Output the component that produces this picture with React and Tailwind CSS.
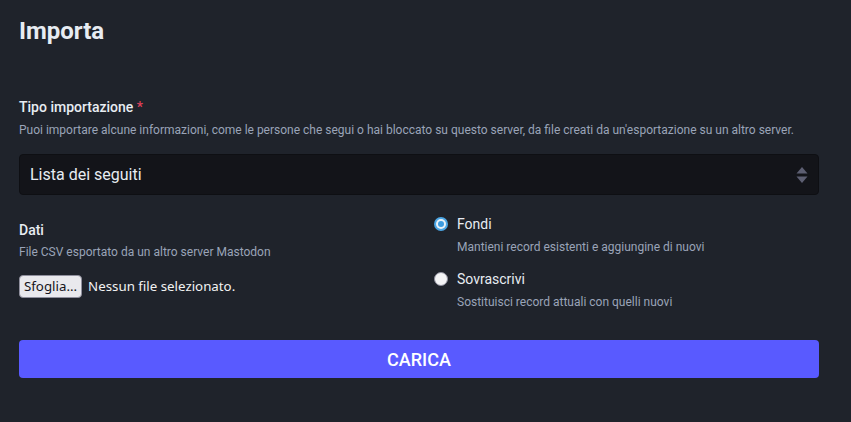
import React from "react";

export default function App() {
  return (
    <div
      className="min-h-[422px] w-full bg-[#1f232b] pl-[19px] pr-[32px] pt-[15px] text-[#d9e1e8]"
      style={{ fontFamily: "Roboto, 'Liberation Sans', sans-serif" }}
    >
      {/* Title */}
      <h1 className="text-[24px] font-bold leading-[32px] text-[#e7ecf2]">Importa</h1>

      {/* Tipo importazione */}
      <div className="mt-[51px]">
        <label className="block text-[14px] font-medium leading-[18px] text-[#e7ecf2]">
          Tipo importazione <span className="text-[#df405a]">*</span>
        </label>
        <p className="mt-[6px] text-[12px] leading-[16px] text-[#9aa4b8]">
          Puoi importare alcune informazioni, come le persone che segui o hai bloccato su questo server, da file creati da un'esportazione su un altro server.
        </p>
        <div className="mt-[16px] flex h-[41px] items-center justify-between rounded-[4px] border border-[#0e0f13] bg-[#131419] pl-[10px] pr-[10px]">
          <span className="text-[16px] text-[#e7ecf2]">Lista dei seguiti</span>
          <svg width="12" height="18" viewBox="0 0 12 18">
            <path d="M6 1 L11.5 7.5 H0.5 Z" fill="#5d5f72" />
            <path d="M6 17 L11.5 10.5 H0.5 Z" fill="#5d5f72" />
          </svg>
        </div>
      </div>

      {/* Dati + radios */}
      <div className="mt-[25px] grid grid-cols-2 gap-[30px]">
        <div>
          <div className="pt-[1px] text-[14px] font-medium leading-[18px] text-[#e7ecf2]">Dati</div>
          <p className="mt-[5px] text-[12px] leading-[16px] text-[#9aa4b8]">
            File CSV esportato da un altro server Mastodon
          </p>
          <div
            className="mt-[15px] flex items-center gap-[6px] text-[13.3px]"
            style={{ fontFamily: "'Noto Sans', 'DejaVu Sans', sans-serif" }}
          >
            <span className="rounded-[4px] border border-[#8f8f9d] bg-[#e9e9ed] px-[4px] py-[1px] leading-[19px] text-[#15141a]">
              Sfoglia...
            </span>
            <span className="text-[#f2f2f2]">Nessun file selezionato.</span>
          </div>
        </div>

        <div className="-mt-[5px] flex flex-col">
          <div className="flex items-start">
            <span className="mt-[2px] flex h-[14px] w-[14px] items-center justify-center rounded-full bg-[#4ba6e5]">
              <span className="flex h-[10px] w-[10px] items-center justify-center rounded-full bg-[#e8f1f8]">
                <span className="h-[6px] w-[6px] rounded-full bg-[#3b9be0]" />
              </span>
            </span>
            <div className="ml-[9px]">
              <div className="text-[14px] leading-[18px] text-[#e7ecf2]">Fondi</div>
              <div className="mt-[6px] text-[12px] leading-[16px] text-[#9aa4b8]">
                Mantieni record esistenti e aggiungine di nuovi
              </div>
            </div>
          </div>
          <div className="mt-[15px] flex items-start">
            <span className="mt-[2px] h-[14px] w-[14px] rounded-full border border-[#8f8f9d] bg-[#f4f4f6]" />
            <div className="ml-[9px]">
              <div className="text-[14px] leading-[18px] text-[#e7ecf2]">Sovrascrivi</div>
              <div className="mt-[6px] text-[12px] leading-[16px] text-[#9aa4b8]">
                Sostituisci record attuali con quelli nuovi
              </div>
            </div>
          </div>
        </div>
      </div>

      {/* Submit */}
      <button className="mt-[30px] flex h-[38px] w-full items-center justify-center rounded-[4px] bg-[#595aff] text-[18px] font-medium text-white">
        CARICA
      </button>
    </div>
  );
}
